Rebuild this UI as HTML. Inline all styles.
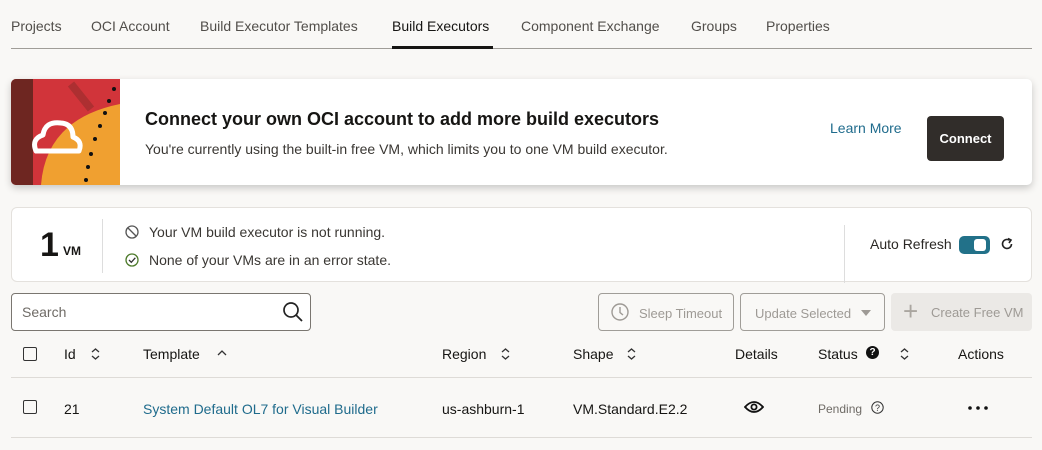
<!DOCTYPE html>
<html><head><style>
*{box-sizing:border-box;margin:0;padding:0}
body{width:1042px;height:450px;background:#f9f8f6;font-family:"Liberation Sans",sans-serif;color:#161513;position:relative;overflow:hidden;font-size:14px}
.a{position:absolute}
.tab{position:absolute;top:18px;font-size:14px;color:#514e4a}
</style></head><body>
<div class="tab" style="left:11px">Projects</div>
<div class="tab" style="left:91px">OCI Account</div>
<div class="tab" style="left:200px">Build Executor Templates</div>
<div class="tab" style="left:392px;color:#161513">Build Executors</div>
<div class="tab" style="left:521px">Component Exchange</div>
<div class="tab" style="left:691px">Groups</div>
<div class="tab" style="left:766px">Properties</div>
<div class="a" style="left:11px;top:48px;width:1021px;height:1px;background:#a09d98"></div>
<div class="a" style="left:392px;top:46px;width:101px;height:3px;background:#161513"></div>

<div class="a" style="left:11px;top:79px;width:1021px;height:106px;background:#fff;border-radius:5px;box-shadow:0 3px 8px rgba(0,0,0,.2);overflow:hidden">
 <svg class="a" style="left:0;top:0" width="109" height="106">
  <rect width="109" height="106" fill="#d1343a"/>
  <rect width="22" height="106" fill="#6e2621"/>
  <path d="M30 106 Q35 40 109 25 L109 106Z" fill="#f0a030"/>
  <path d="M60 5 L80 30" stroke="#8a2a28" stroke-width="8" opacity=".5"/>
  <g fill="#111"><circle cx="103" cy="10" r="2"/><circle cx="98" cy="22" r="2"/><circle cx="94" cy="34" r="2"/><circle cx="89" cy="47" r="2"/><circle cx="84" cy="60" r="2"/><circle cx="80" cy="75" r="2"/><circle cx="77" cy="88" r="2"/><circle cx="75" cy="101" r="2"/></g>
  <path d="M40 72 L25 72 Q20 60 32 56 Q34 42 50 44 Q62 45 62 58 Q72 62 68 72 Z" fill="none" stroke="#fff" stroke-width="5" stroke-linejoin="round"/>
 </svg>
 <div class="a" style="left:134px;top:30px;font-size:18px;font-weight:bold">Connect your own OCI account to add more build executors</div>
 <div class="a" style="left:134px;top:62px;font-size:14px;color:#3a3733">You're currently using the built-in free VM, which limits you to one VM build executor.</div>
 <div class="a" style="left:819px;top:41px;color:#1f6b8c;font-size:14px">Learn More</div>
 <div class="a" style="left:916px;top:37px;width:77px;height:45px;background:#312d2a;border-radius:4px;color:#fff;font-weight:bold;font-size:13px;text-align:center;line-height:45px">Connect</div>
</div>

<div class="a" style="left:11px;top:207px;width:1021px;height:75px;background:#fff;border:1px solid #e4e1dd;border-radius:6px">
 <div class="a" style="left:28px;top:18px;font-size:34px;font-weight:bold">1</div>
 <div class="a" style="left:51px;top:36px;font-size:12px;font-weight:bold">VM</div>
 <div class="a" style="left:90px;top:11px;width:1px;height:54px;background:#ddd"></div>
 <svg class="a" style="left:113px;top:17px" width="14" height="14"><circle cx="7" cy="7" r="6" fill="none" stroke="#555" stroke-width="1.3"/><path d="M3 3L11 11" stroke="#555" stroke-width="1.3"/></svg>
 <div class="a" style="left:137px;top:16px;color:#3a3733">Your VM build executor is not running.</div>
 <svg class="a" style="left:113px;top:45px" width="14" height="14"><circle cx="7" cy="7" r="6" fill="none" stroke="#4d7a2a" stroke-width="1.3"/><path d="M4 7L6.3 9.3L10.3 4.8" fill="none" stroke="#333" stroke-width="1.3"/></svg>
 <div class="a" style="left:137px;top:44px;color:#3a3733">None of your VMs are in an error state.</div>
 <div class="a" style="left:832px;top:17px;width:1px;height:58px;background:#ddd"></div>
 <div class="a" style="left:858px;top:28px;color:#2b2825">Auto Refresh</div>
 <div class="a" style="left:947px;top:28px;width:31px;height:18px;background:#227189;border-radius:5px"><div class="a" style="left:15px;top:3px;width:12px;height:12px;background:#fff;border-radius:3px"></div></div>
 <svg class="a" style="left:988px;top:29px" width="14" height="14"><path d="M11.5 7A4.5 4.5 0 1 1 9.5 3.2" fill="none" stroke="#222" stroke-width="1.6"/><path d="M8 1.5L11 3L9 6" fill="none" stroke="#222" stroke-width="1.6"/></svg>
</div>

<div class="a" style="left:11px;top:293px;width:300px;height:38px;background:#fff;border:1px solid #7a7670;border-radius:4px">
 <div class="a" style="left:10px;top:10px;color:#6f6b66">Search</div>
 <svg class="a" style="left:270px;top:7px" width="22" height="22"><circle cx="9" cy="9" r="7" fill="none" stroke="#222" stroke-width="1.7"/><path d="M14 14L20 20" stroke="#222" stroke-width="1.8"/></svg>
</div>
<div class="a" style="left:598px;top:293px;width:136px;height:38px;border:1px solid #a09d98;border-radius:4px">
 <svg class="a" style="left:11px;top:8px" width="20" height="20"><circle cx="10" cy="10" r="8" fill="none" stroke="#9e9a95" stroke-width="1.4"/><path d="M10 5V10.5L13 13" fill="none" stroke="#9e9a95" stroke-width="1.4"/></svg>
 <div class="a" style="left:40px;top:12px;font-size:13px;color:#9e9a95">Sleep Timeout</div>
</div>
<div class="a" style="left:740px;top:293px;width:145px;height:38px;border:1px solid #a09d98;border-radius:4px">
 <div class="a" style="left:14px;top:12px;font-size:13px;color:#9e9a95">Update Selected</div>
 <div class="a" style="left:120px;top:16px;border:5px solid transparent;border-top:6px solid #9e9a95"></div>
</div>
<div class="a" style="left:891px;top:293px;width:141px;height:38px;background:#ebe9e6;border-radius:4px">
 <div class="a" style="left:12px;top:4px;font-size:26px;font-weight:300;color:#aaa6a0;line-height:28px">+</div>
 <div class="a" style="left:40px;top:12px;font-size:13px;color:#9e9a95">Create Free VM</div>
</div>

<div class="a" style="left:23px;top:347px;width:14px;height:14px;border:1.5px solid #333;border-radius:2px"></div>
<div class="a" style="left:64px;top:346px">Id</div>
<div class="a" style="left:143px;top:346px">Template</div>
<svg class="a" style="left:216px;top:349px" width="12" height="8"><path d="M2 6L6 2L10 6" fill="none" stroke="#333" stroke-width="1.3"/></svg>
<div class="a" style="left:442px;top:346px">Region</div>
<div class="a" style="left:573px;top:346px">Shape</div>
<div class="a" style="left:735px;top:346px">Details</div>
<div class="a" style="left:818px;top:346px">Status</div>
<div class="a" style="left:866px;top:346px;width:13px;height:13px;border-radius:50%;background:#111;color:#fff;font-size:10px;font-weight:bold;text-align:center;line-height:13px">?</div>
<div class="a" style="left:958px;top:346px">Actions</div>
<svg class="a" style="left:90px;top:347px" width="420" height="14"><g fill="none" stroke="#333" stroke-width="1.3"><path d="M2 5L5.5 2L9 5M2 9L5.5 12L9 9"/><path d="M412 5L415.5 2L419 5M412 9L415.5 12L419 9"/></g></svg>
<svg class="a" style="left:626px;top:347px" width="290" height="14"><g fill="none" stroke="#333" stroke-width="1.3"><path d="M2 5L5.5 2L9 5M2 9L5.5 12L9 9"/><path d="M275 5L278.5 2L282 5M275 9L278.5 12L282 9"/></g></svg>
<div class="a" style="left:11px;top:377px;width:1021px;height:1px;background:#dedbd7"></div>
<div class="a" style="left:23px;top:400px;width:14px;height:14px;border:1.5px solid #333;border-radius:2px"></div>
<div class="a" style="left:64px;top:401px">21</div>
<div class="a" style="left:143px;top:401px;color:#1f6b8c">System Default OL7 for Visual Builder</div>
<div class="a" style="left:442px;top:401px">us-ashburn-1</div>
<div class="a" style="left:573px;top:401px">VM.Standard.E2.2</div>
<svg class="a" style="left:744px;top:400px" width="20" height="14"><path d="M1 7Q10 -3 19 7Q10 17 1 7Z" fill="none" stroke="#111" stroke-width="1.8"/><circle cx="10" cy="7" r="2.6" fill="none" stroke="#111" stroke-width="1.8"/></svg>
<div class="a" style="left:818px;top:402px;font-size:12px;color:#6f6b66">Pending</div>
<svg class="a" style="left:871px;top:401px" width="13" height="13"><circle cx="6.5" cy="6.5" r="5.7" fill="none" stroke="#333" stroke-width="1"/><text x="6.5" y="10" font-size="9" text-anchor="middle" fill="#333" font-family="Liberation Sans">?</text></svg>
<svg class="a" style="left:966px;top:404px" width="24" height="8"><g fill="#111"><circle cx="4" cy="4" r="1.8"/><circle cx="12" cy="4" r="1.8"/><circle cx="20" cy="4" r="1.8"/></g></svg>
<div class="a" style="left:11px;top:437px;width:1021px;height:1px;background:#dedbd7"></div>
</body></html>
